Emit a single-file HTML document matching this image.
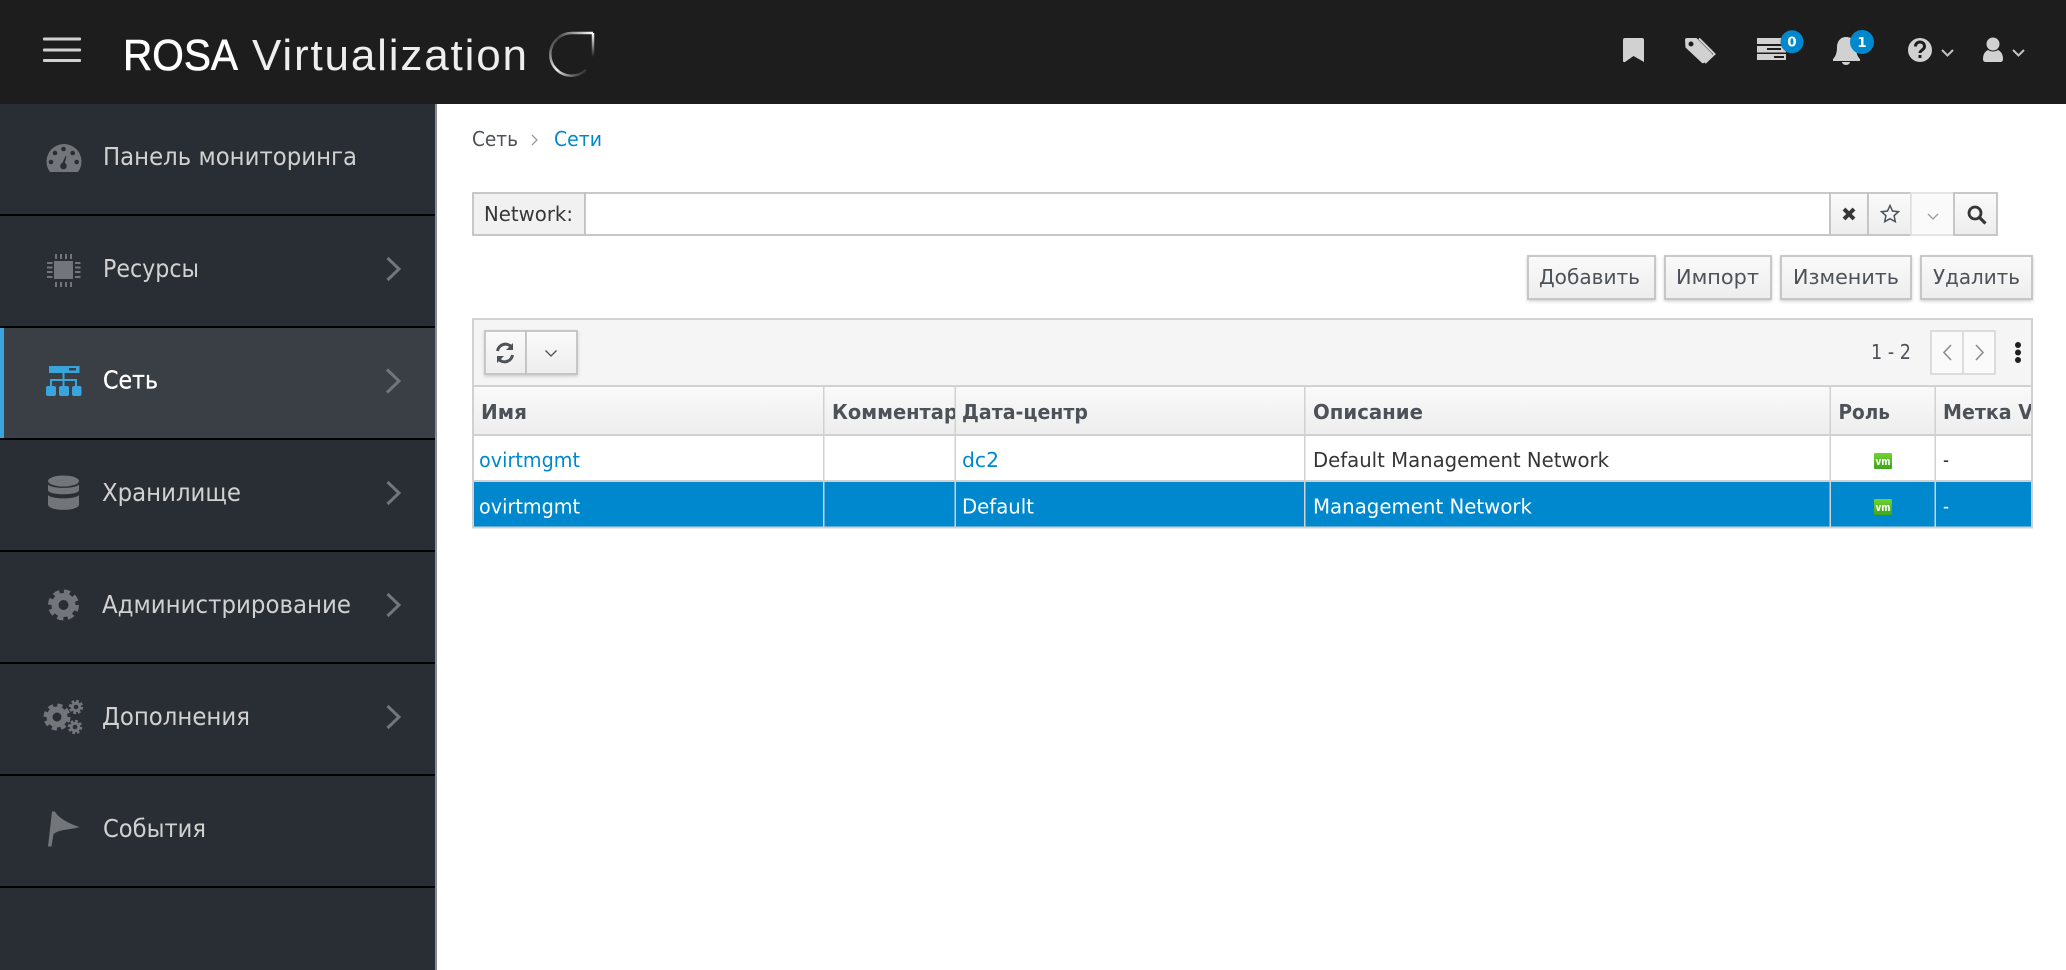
<!DOCTYPE html>
<html lang="ru"><head><meta charset="utf-8"><title>ROSA Virtualization</title>
<style>
html,body{margin:0;padding:0;background:#fff;width:2066px;height:970px;overflow:hidden}
svg{display:block}
text{font-family:"DejaVu Sans","Liberation Sans",sans-serif;font-size:20.5px;fill:#363636}
.nav{font-size:24.5px;fill:#d1d1d1}
.th{font-weight:700;fill:#4d5258;font-size:20px}
.a{fill:#0088ce}
.w{fill:#fff}
.b{fill:#4d5258}
.lg{font-family:"Liberation Sans",sans-serif;font-size:44px;fill:#fff}
.bd{font-size:13.5px;font-weight:700;fill:#fff;text-anchor:middle}
.i{fill:#72767b}
.c{fill:none;stroke:#72767b;stroke-width:3}
.ch{fill:none;stroke:#c4c4c4;stroke-width:2}
.g{fill:#d1d1d1}
</style></head><body>
<svg width="2066" height="970" viewBox="0 0 2066 970" xmlns="http://www.w3.org/2000/svg">
<defs>
<linearGradient id="btn" x1="0" y1="0" x2="0" y2="1"><stop offset="0" stop-color="#fafafa"/><stop offset="1" stop-color="#ededed"/></linearGradient>
<linearGradient id="r1" gradientUnits="userSpaceOnUse" x1="593" y1="33" x2="593" y2="57"><stop offset="0" stop-color="#fff"/><stop offset="1" stop-color="#fff" stop-opacity="0"/></linearGradient>
<linearGradient id="r2" gradientUnits="userSpaceOnUse" x1="593" y1="33" x2="557" y2="39"><stop offset="0" stop-color="#fff"/><stop offset="1" stop-color="#444"/></linearGradient>
<linearGradient id="r3" gradientUnits="userSpaceOnUse" x1="555" y1="38" x2="588" y2="72"><stop offset="0" stop-color="#444"/><stop offset=".5" stop-color="#f0f0f0"/><stop offset="1" stop-color="#fff" stop-opacity="0"/></linearGradient>
<linearGradient id="vm" x1="0" y1="0" x2="0" y2="1"><stop offset="0" stop-color="#6fd42e"/><stop offset="1" stop-color="#3fa51c"/></linearGradient>
<filter id="sh" x="-10%" y="-10%" width="120%" height="125%"><feDropShadow dx="0" dy="1.5" stdDeviation="1.5" flood-color="#000" flood-opacity=".18"/></filter>
<clipPath id="c1"><rect x="825" y="386" width="130" height="50"/></clipPath>
<clipPath id="c2"><rect x="1937" y="386" width="94" height="50"/></clipPath>
<clipPath id="c3"><rect x="40" y="140" width="50" height="32"/></clipPath>
</defs>

<!-- header -->
<rect width="2066" height="104" fill="#1d1d1d"/>
<rect x="43" y="37.500" width="38" height="3" rx="1" fill="#d1d1d1"/>
<rect x="43" y="48.500" width="38" height="3" rx="1" fill="#d1d1d1"/>
<rect x="43" y="59" width="38" height="3" rx="1" fill="#d1d1d1"/>
<text class="lg" x="123" y="70" textLength="115" lengthAdjust="spacingAndGlyphs" style="stroke:#fff;stroke-width:.6">ROSA</text>
<text class="lg" x="252" y="70" textLength="275" lengthAdjust="spacing" style="fill:#eee">Virtualization</text>
<g fill="none" stroke-width="2.500">
<path d="M593 33V57" stroke="url(#r1)"/>
<path d="M593 33H572A21 21 0 0 0 557 39" stroke="url(#r2)"/>
<path d="M557 39A21 21 0 0 0 586 70" stroke="url(#r3)"/>
</g>

<path class="g" d="M1623 40q0-2 2-2h17q2 0 2 2v22l-10.500-6-8.500 6q-2 .5-2-1z"/>
<path class="g" d="M1685 40q0-2 2-2h9.500l15 15q1.500 1.500 0 3l-7 6.500q-1.500 1.500-3 0l-16-15z"/>
<circle cx="1691" cy="44" r="2.500" fill="#1d1d1d"/>
<path d="M1699 38.500l15.500 15.500-9.500 9" fill="none" stroke="#d1d1d1" stroke-width="2"/>
<path class="g" d="M1757 38h29v6h-29zM1757 46h29v6.500h-29zM1757 54h29v6h-29z"/>
<rect x="1767" y="48" width="14" height="2" fill="#1d1d1d"/><rect x="1774" y="56" width="10" height="2" fill="#1d1d1d"/>
<circle cx="1792" cy="41.700" r="11.500" fill="#0088ce"/>
<text class="bd" x="1792" y="46.500">0</text>
<path class="g" d="M1846 37c-6 0-9 5-9 10 0 7-2 10-4 12v2h27v-2c-2-2-4-5-4-12 0-5-3-10-10-10z"/>
<path class="g" d="M1842 62h8a4 3 0 0 1-8 0z"/>
<circle cx="1862" cy="42" r="12" fill="#0088ce"/>
<text class="bd" x="1862" y="47">1</text>
<circle cx="1920" cy="50" r="12" fill="#d1d1d1"/>
<path d="M1915.500 46.500c0-6 9-6 9 0 0 3.500-4.500 3.500-4.500 6.500" fill="none" stroke="#1d1d1d" stroke-width="3"/>
<rect x="1918.500" y="55" width="3" height="3" fill="#1d1d1d"/>
<path class="ch" d="M1942 50l5.500 5.500 5.500-5.500"/>
<circle class="g" cx="1993" cy="44" r="6.500"/>
<path class="g" d="M1983 59c0-6 3-8 5-9 3 2 7 2 10 0 2 1 5 3 5 9 0 2-1 3-3 3h-14c-2 0-3-1-3-3z"/>
<path class="ch" d="M2013 50l5.500 5.500 5.500-5.500"/>

<!-- sidebar -->
<rect y="104" width="435" height="866" fill="#292e34"/>
<rect x="435" y="104" width="2" height="866" fill="#8a8d90"/>
<rect y="328" width="435" height="110" fill="#393f44"/>
<rect y="328" width="4" height="110" fill="#39a5dc"/>
<g fill="#030303">
<rect y="214" width="435" height="2"/><rect y="326" width="435" height="2"/><rect y="438" width="435" height="2"/><rect y="550" width="435" height="2"/><rect y="662" width="435" height="2"/><rect y="774" width="435" height="2"/><rect y="886" width="435" height="2"/>
</g>

<!-- dashboard icon -->
<circle class="i" cx="64" cy="161.500" r="17.500" clip-path="url(#c3)"/>
<g fill="#292e34"><circle cx="63.500" cy="149" r="2.300"/><circle cx="55" cy="153" r="2.300"/><circle cx="72.700" cy="153" r="2.300"/><circle cx="51" cy="162" r="2.300"/><circle cx="76.700" cy="162" r="2.300"/><circle cx="63.500" cy="166" r="3.300"/><path d="M61.500 165l4-9 1 .5-2.500 9.500z"/></g>
<!-- chip -->
<rect class="i" x="54" y="261" width="19" height="18"/>
<g class="i">
<rect x="55" y="254" width="2" height="5"/><rect x="60" y="254" width="2" height="5"/><rect x="65" y="254" width="2" height="5"/><rect x="70" y="254" width="2" height="5"/>
<rect x="55" y="282" width="2" height="5"/><rect x="60" y="282" width="2" height="5"/><rect x="65" y="282" width="2" height="5"/><rect x="70" y="282" width="2" height="5"/>
<rect x="47" y="262" width="5.500" height="2"/><rect x="47" y="266.500" width="5.500" height="2"/><rect x="47" y="271" width="5.500" height="2"/><rect x="47" y="276" width="5.500" height="2"/>
<rect x="75" y="262" width="5.500" height="2"/><rect x="75" y="266.500" width="5.500" height="2"/><rect x="75" y="271" width="5.500" height="2"/><rect x="75" y="276" width="5.500" height="2"/>
</g>
<!-- network -->
<rect x="49" y="366" width="30.500" height="7" fill="#39a5dc"/>
<rect x="69" y="368" width="7" height="2.500" fill="#393f44"/>
<path d="M63.500 373v13M51 386v-6h25v6" fill="none" stroke="#39a5dc" stroke-width="2"/>
<rect x="46" y="386" width="10" height="10" rx="2" fill="#39a5dc"/><rect x="59" y="386" width="10" height="10" rx="2" fill="#39a5dc"/><rect x="72" y="386" width="9.500" height="10" rx="2" fill="#39a5dc"/>
<!-- storage -->
<ellipse class="i" cx="63.500" cy="481" rx="15.500" ry="5.500"/>
<path class="i" d="M48 484.500c3 4.500 28 4.500 31 0v6c-2 5-29 5-31 0z"/>
<path class="i" d="M48 495c3 4.500 28 4.500 31 0v10c-2 6.500-29 6.500-31 0z"/>
<!-- gear -->
<g fill="none" stroke="#72767b">
<circle cx="63.500" cy="605" r="8.500" stroke-width="7"/>
<circle cx="63.500" cy="605" r="13.200" stroke-width="4.600" stroke-dasharray="6 4.370"/>
<circle cx="57" cy="717" r="7.500" stroke-width="6"/>
<circle cx="57" cy="717" r="11.500" stroke-width="4" stroke-dasharray="5 4.030"/>
<circle cx="76" cy="707" r="3.800" stroke-width="3"/>
<circle cx="76" cy="707" r="6" stroke-width="2.400" stroke-dasharray="2.700 2"/>
<circle cx="75" cy="727" r="3.800" stroke-width="3"/>
<circle cx="75" cy="727" r="6" stroke-width="2.400" stroke-dasharray="2.700 2"/>
</g>
<!-- flag -->
<path class="i" d="M48 846.500L52 811.500H55C58 818 70 824 79.500 827C70 830 60 829 53.500 834L51.500 846.500Z"/>

<text class="nav" x="103" y="165" textLength="254" lengthAdjust="spacingAndGlyphs">Панель мониторинга</text>
<text class="nav" x="103" y="277" textLength="96" lengthAdjust="spacingAndGlyphs">Ресурсы</text>
<text class="nav" x="103" y="388.500" textLength="55" lengthAdjust="spacingAndGlyphs" style="fill:#fff;stroke:#fff;stroke-width:.3">Сеть</text>
<text class="nav" x="102" y="501" textLength="139" lengthAdjust="spacingAndGlyphs">Хранилище</text>
<text class="nav" x="102" y="613" textLength="249" lengthAdjust="spacingAndGlyphs">Администрирование</text>
<text class="nav" x="102" y="725" textLength="148" lengthAdjust="spacingAndGlyphs">Дополнения</text>
<text class="nav" x="103" y="837" textLength="103" lengthAdjust="spacingAndGlyphs">События</text>
<path class="c" d="M387.500 258l11.500 11-11.500 11M387.500 482l11.500 11-11.500 11M387.500 594l11.500 11-11.500 11M387.500 706l11.500 11-11.500 11"/>
<path class="c" d="M387 369.500l12 11.500-12 11.500"/>

<!-- breadcrumb -->
<text class="b" x="472" y="146" textLength="46" lengthAdjust="spacingAndGlyphs">Сеть</text>
<path d="M532 135l5 5-5 5" fill="none" stroke="#9c9c9c" stroke-width="1.300"/>
<text class="a" x="554" y="146" textLength="48" lengthAdjust="spacingAndGlyphs">Сети</text>

<!-- search -->
<g stroke-width="1.800">
<rect x="473" y="193" width="112" height="42" fill="#f1f1f1" stroke="#c2c2c2"/>
<rect x="585" y="193" width="1245" height="42" fill="#fff" stroke="#c2c2c2"/>
<rect x="1830" y="193" width="38" height="42" fill="url(#btn)" stroke="#c2c2c2"/>
<rect x="1868" y="193" width="43" height="42" fill="url(#btn)" stroke="#c2c2c2"/>
<rect x="1911" y="193" width="43" height="42" fill="#fafafa" stroke="#e3e3e3"/>
<rect x="1954" y="193" width="43" height="42" fill="url(#btn)" stroke="#c2c2c2"/>
</g>
<text x="484" y="221" textLength="89" lengthAdjust="spacingAndGlyphs" style="fill:#363636">Network:</text>
<path d="M1844 209l10 10M1854 209l-10 10" stroke="#363636" stroke-width="4"/>
<path d="M1890 205.500l2.500 5.500 6 .7-4.400 4 1.200 6-5.300-3-5.300 3 1.200-6-4.400-4 6-.7z" fill="none" stroke="#4d5258" stroke-width="1.500"/>
<path d="M1928 214l5 5 5-5" fill="none" stroke="#9c9c9c" stroke-width="1.300"/>
<circle cx="1975" cy="213" r="6" fill="none" stroke="#363636" stroke-width="2.800"/>
<path d="M1979.500 217.500l6 6" stroke="#363636" stroke-width="3.200"/>

<!-- action buttons -->
<g filter="url(#sh)" fill="url(#btn)" stroke="#c2c2c2" stroke-width="1.800">
<rect x="1528" y="256" width="127" height="43"/>
<rect x="1665" y="256" width="106" height="43"/>
<rect x="1781" y="256" width="130" height="43"/>
<rect x="1921" y="256" width="111" height="43"/>
</g>
<text class="b" x="1539" y="284" textLength="101" lengthAdjust="spacingAndGlyphs">Добавить</text>
<text class="b" x="1676" y="284" textLength="83" lengthAdjust="spacingAndGlyphs">Импорт</text>
<text class="b" x="1793" y="284" textLength="106" lengthAdjust="spacingAndGlyphs">Изменить</text>
<text class="b" x="1933" y="284" textLength="87" lengthAdjust="spacingAndGlyphs">Удалить</text>

<!-- grid toolbar -->
<rect x="473" y="319" width="1559" height="67" fill="#f5f5f5" stroke="#d1d1d1" stroke-width="2"/>
<g filter="url(#sh)" fill="url(#btn)" stroke="#c2c2c2" stroke-width="1.800">
<rect x="485" y="331" width="41" height="43"/>
<rect x="526" y="331" width="51" height="43"/>
</g>
<path d="M497.500 351a8 8 0 0 1 14-4M512.500 355a8 8 0 0 1-14 4" fill="none" stroke="#4d5258" stroke-width="3"/>
<path d="M513 343v7h-7zM497 363v-7h7z" fill="#4d5258"/>
<path d="M545.500 350.500l5.500 5.500 5.500-5.500" fill="none" stroke="#4d5258" stroke-width="1.300"/>
<text class="b" x="1871" y="359" textLength="40" lengthAdjust="spacingAndGlyphs">1 - 2</text>
<rect x="1931" y="331" width="32" height="43" fill="#fafafa" stroke="#dcdcdc" stroke-width="2"/>
<rect x="1963" y="331" width="32" height="43" fill="#fafafa" stroke="#dcdcdc" stroke-width="2"/>
<path d="M1951 345l-7 7.500 7 7.500M1976 345l7 7.500-7 7.500" fill="none" stroke="#8b8d8f" stroke-width="1.600"/>
<g fill="#1f1f1f"><circle cx="2018" cy="345" r="3"/><circle cx="2018" cy="352.500" r="3"/><circle cx="2018" cy="360" r="3"/></g>

<!-- table -->
<rect x="473" y="386" width="1559" height="49" fill="url(#btn)"/>
<rect x="473" y="482" width="1559" height="45.500" fill="#0088ce"/>
<g fill="#d1d1d1">
<rect x="472" y="385" width="1561" height="2"/>
<rect x="472" y="434" width="1561" height="2"/>
<rect x="472" y="480" width="1561" height="2"/>
<rect x="472" y="526.500" width="1561" height="2"/>
<rect x="472" y="385" width="2" height="143"/>
<rect x="2031" y="318" width="2" height="210"/>
<rect x="823" y="386" width="1.500" height="141"/>
<rect x="954.500" y="386" width="1.500" height="141"/>
<rect x="1304" y="386" width="1.500" height="141"/>
<rect x="1829.500" y="386" width="1.500" height="141"/>
<rect x="1934.500" y="386" width="1.500" height="141"/>
</g>
<text class="th" x="481" y="419" textLength="46" lengthAdjust="spacingAndGlyphs">Имя</text>
<g clip-path="url(#c1)"><text class="th" x="832" y="419" textLength="153" lengthAdjust="spacingAndGlyphs">Комментарий</text></g>
<text class="th" x="962" y="419" textLength="126" lengthAdjust="spacingAndGlyphs">Дата-центр</text>
<text class="th" x="1313" y="419" textLength="110" lengthAdjust="spacingAndGlyphs">Описание</text>
<text class="th" x="1838.500" y="419" textLength="51.500" lengthAdjust="spacingAndGlyphs">Роль</text>
<g clip-path="url(#c2)"><text class="th" x="1943" y="419" textLength="90" lengthAdjust="spacingAndGlyphs">Метка V</text></g>

<text class="a" x="479" y="467" textLength="101" lengthAdjust="spacingAndGlyphs">ovirtmgmt</text>
<text class="a" x="962" y="467" textLength="37" lengthAdjust="spacingAndGlyphs">dc2</text>
<text x="1313" y="467" textLength="296" lengthAdjust="spacingAndGlyphs">Default Management Network</text>
<text x="1943" y="467" textLength="6" lengthAdjust="spacingAndGlyphs">-</text>
<text class="w" x="479" y="513.500" textLength="101" lengthAdjust="spacingAndGlyphs">ovirtmgmt</text>
<text class="w" x="962" y="513.500" textLength="72" lengthAdjust="spacingAndGlyphs">Default</text>
<text class="w" x="1313" y="513.500" textLength="219" lengthAdjust="spacingAndGlyphs">Management Network</text>
<text class="w" x="1943" y="513.500" textLength="6" lengthAdjust="spacingAndGlyphs">-</text>
<rect x="1874" y="453" width="18" height="16" rx="1" fill="url(#vm)"/>
<text x="1875.500" y="465" style="font-size:11px;font-weight:700;fill:#fff" textLength="15" lengthAdjust="spacingAndGlyphs">vm</text>
<rect x="1874" y="499" width="18" height="16" rx="1" fill="url(#vm)"/>
<text x="1875.500" y="511" style="font-size:11px;font-weight:700;fill:#fff" textLength="15" lengthAdjust="spacingAndGlyphs">vm</text>
</svg>
</body></html>
